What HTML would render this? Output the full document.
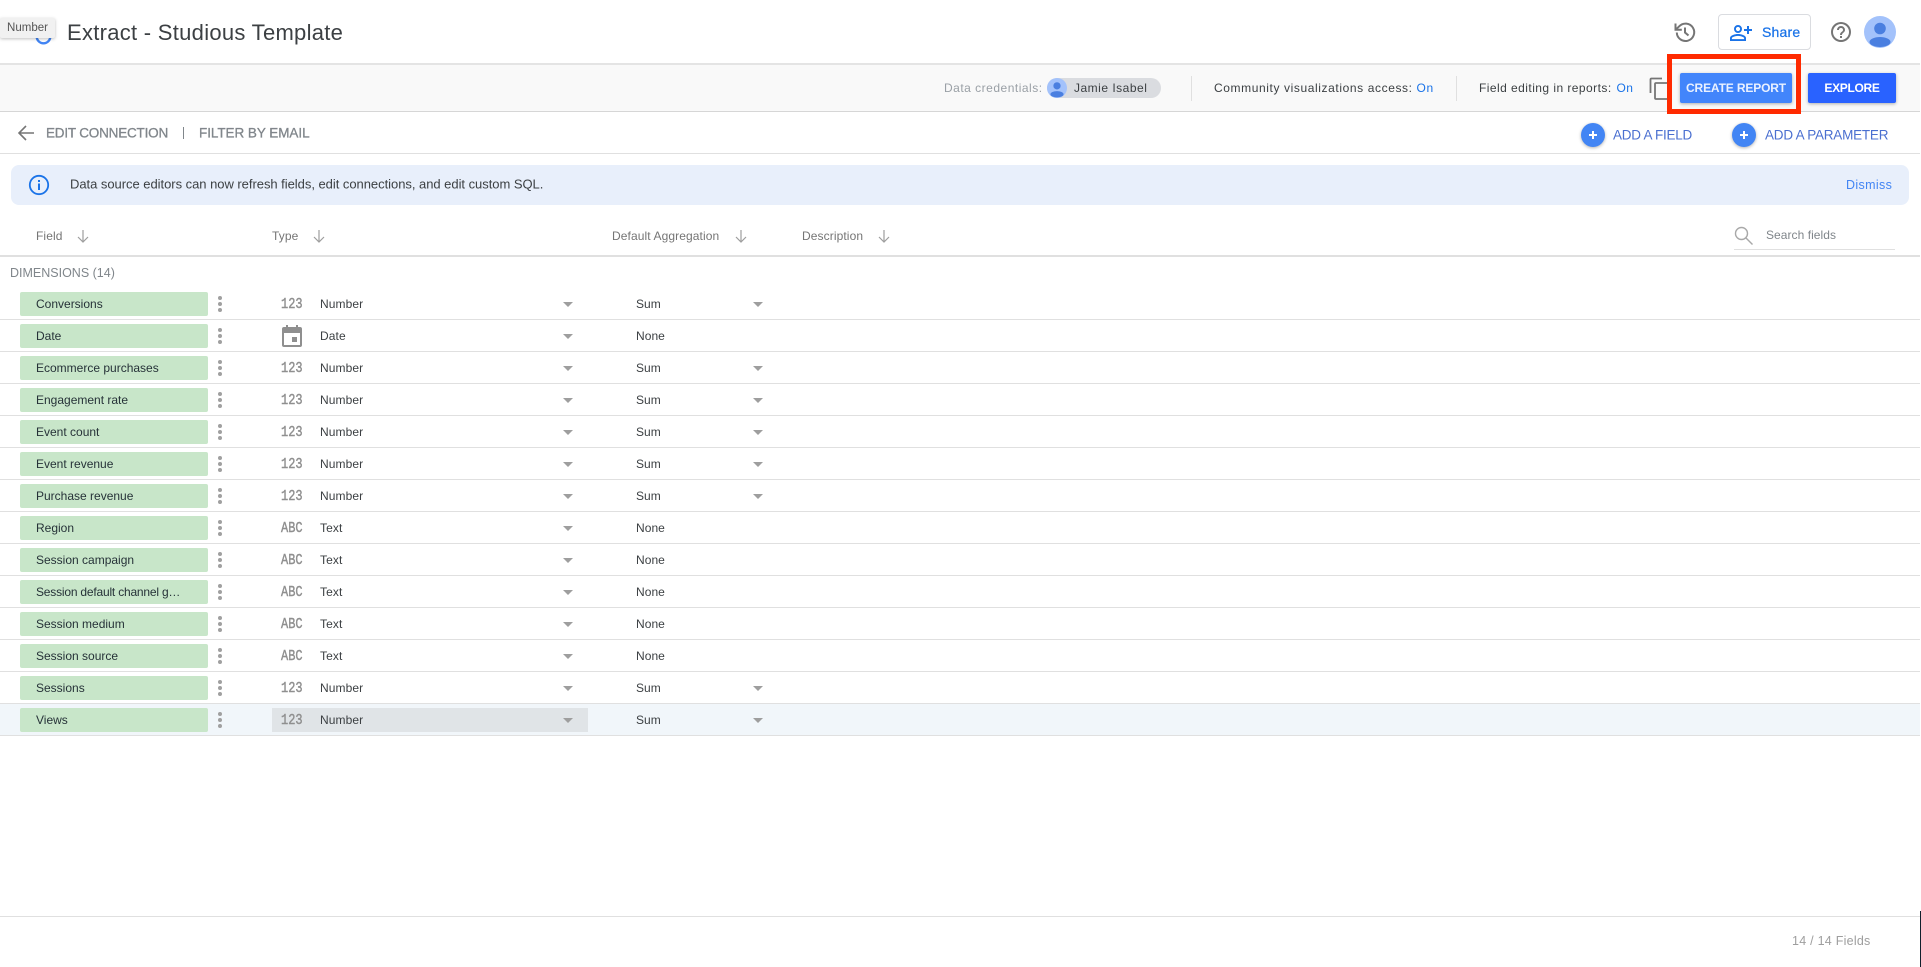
<!DOCTYPE html>
<html lang="en">
<head>
<meta charset="utf-8">
<title>Extract - Studious Template</title>
<style>
html,body{margin:0;padding:0;background:#fff}
body{width:1921px;height:967px;position:relative;overflow:hidden;font-family:"Liberation Sans",Arial,sans-serif;color:#3c4043}
.a{position:absolute;white-space:nowrap}
.t{position:absolute;white-space:nowrap;transform:translateY(-50%)}
.line{position:absolute;left:0;width:1920px;background:#e0e0e0}
.vd{position:absolute;width:1px;background:#e0e0e0;top:76px;height:25px}
.h{font-size:12px;color:#757575;letter-spacing:.1px}
.row{position:absolute;left:0;width:1920px;height:32px;border-bottom:1px solid #e0e0e0;box-sizing:border-box}
.chip{position:absolute;left:20px;top:4px;width:188px;height:24px;background:#c8e6c9;border-radius:2px;font-size:12px;line-height:24px;padding-left:16px;box-sizing:border-box;color:#263238;letter-spacing:0;white-space:nowrap}
.dots{position:absolute;left:218px;top:8px;width:4px;height:4px;border-radius:50%;background:#a0a0a0;box-shadow:0 6px 0 #a0a0a0,0 12px 0 #a0a0a0}
.ic{position:absolute;left:281px;top:1px;font:15px/32px "Liberation Mono",monospace;color:#8f8f8f;transform:scaleX(.8);transform-origin:0 50%;-webkit-text-stroke:.4px #8f8f8f}
.ty{position:absolute;left:320px;top:0;font-size:12px;line-height:32px;color:#3c4043;letter-spacing:.1px}
.ag{position:absolute;left:636px;top:0;font-size:12px;line-height:32px;color:#3c4043;letter-spacing:.05px}
.ar{position:absolute;width:0;height:0;border-left:5px solid transparent;border-right:5px solid transparent;border-top:5px solid #9e9e9e;top:14px}
.a1{left:563px}.a2{left:753px}
.plus{position:absolute;top:123px;width:24px;height:24px;border-radius:50%;background:#4285f4;box-shadow:0 1px 3px rgba(0,0,0,.3)}
.plus:before{content:"";position:absolute;left:8px;top:11px;width:8px;height:2px;background:#fff}
.plus:after{content:"";position:absolute;left:11px;top:8px;width:2px;height:8px;background:#fff}
svg{position:absolute;display:block}
</style>
</head>
<body>

<!-- Top bar -->
<svg style="left:35px;top:28px" width="17" height="17" viewBox="0 0 17 17"><circle cx="8.500" cy="8.500" r="6.800" fill="none" stroke="#4285f4" stroke-width="2.400"/></svg>
<div class="a" style="left:0;top:18px;width:55px;height:20px;background:#f1f1f1;border-radius:2px;box-shadow:0 1px 3px rgba(0,0,0,.25);font-size:11.500px;line-height:20px;text-align:center;color:#555">Number</div>
<div class="t" style="left:67px;top:33px;font-size:22px;color:#3c4043;letter-spacing:.28px">Extract - Studious Template</div>

<svg style="left:1673px;top:20px" width="24" height="24" viewBox="0 0 24 24"><path fill="none" stroke="#757575" stroke-width="2" d="M3.800 12.500a8.700 8.700 0 1 0 2.400-6.200L3.200 9.200"/><path fill="none" stroke="#757575" stroke-width="2" d="M2.500 3.500v6.300h6.300"/><path fill="none" stroke="#757575" stroke-width="2" d="M12 7.500v5l3.500 3"/></svg>
<div class="a" style="left:1718px;top:14px;width:93px;height:36px;border:1px solid #dadce0;border-radius:4px;box-sizing:border-box;background:#fff"></div>
<svg style="left:1729px;top:20px" width="24" height="24" viewBox="0 0 24 24"><path fill="#1a73e8" d="M9 5a4 4 0 1 0 0 8 4 4 0 0 0 0-8zm0 1.900a2.100 2.100 0 1 1 0 4.200 2.100 2.100 0 0 1 0-4.200zM9 14c-2.700 0-8 1.300-8 4v3h16v-3c0-2.700-5.300-4-8-4zm-6.100 5.100V18c0-.6 3.100-2.100 6.100-2.100s6.100 1.500 6.100 2.100v1.100zM20 9V6h-2v3h-3v2h3v3h2v-3h3V9z"/></svg>
<div class="t" style="left:1762px;top:32px;font-size:14px;color:#1a73e8;letter-spacing:.2px;-webkit-text-stroke:.25px #1a73e8">Share</div>
<svg style="left:1829px;top:20px" width="24" height="24" viewBox="0 0 24 24"><path fill="#757575" d="M12 2a10 10 0 1 0 0 20 10 10 0 0 0 0-20zm0 18a8 8 0 1 1 0-16 8 8 0 0 1 0 16zm-1-4h2v2h-2zm1-10a4 4 0 0 0-4 4h2a2 2 0 1 1 4 0c0 2-3 1.750-3 5h2c0-2.250 3-2.500 3-5a4 4 0 0 0-4-4z"/></svg>
<svg style="left:1864px;top:16px" width="32" height="32" viewBox="0 0 32 32"><circle cx="16" cy="16" r="16" fill="#a3c2fb"/><circle cx="16" cy="12.500" r="5.800" fill="#4a7fe0"/><ellipse cx="16" cy="26" rx="10.500" ry="5" fill="#4a7fe0"/></svg>

<div class="line" style="top:63px;height:2px;background:#e4e4e4"></div>

<!-- Toolbar -->
<div class="a" style="left:0;top:65px;width:1920px;height:46px;background:#f9f9f9"></div>
<div class="line" style="top:111px;height:1px;background:#d6d6d6"></div>
<div class="t" style="left:944px;top:88px;font-size:12px;color:#9aa0a6;letter-spacing:.5px">Data credentials:</div>
<div class="a" style="left:1047px;top:78px;width:114px;height:20px;border-radius:10px;background:#dadce0"></div>
<svg style="left:1047px;top:78px" width="20" height="20" viewBox="0 0 32 32"><circle cx="16" cy="16" r="16" fill="#a3c2fb"/><circle cx="16" cy="12.500" r="5.800" fill="#4a7fe0"/><ellipse cx="16" cy="26" rx="10.500" ry="5" fill="#4a7fe0"/></svg>
<div class="t" style="left:1074px;top:88px;font-size:12px;color:#3c4043;letter-spacing:.5px">Jamie Isabel</div>
<div class="vd" style="left:1191px"></div>
<div class="t" style="left:1214px;top:88px;font-size:12px;color:#3c4043;letter-spacing:.6px">Community visualizations access: <span style="color:#1a73e8">On</span></div>
<div class="vd" style="left:1456px"></div>
<div class="t" style="left:1479px;top:88px;font-size:12px;color:#3c4043;letter-spacing:.45px">Field editing in reports: <span style="color:#1a73e8;margin-left:1px">On</span></div>
<svg style="left:1648px;top:76px" width="25" height="25" viewBox="0 0 25 25"><path fill="none" stroke="#757575" stroke-width="1.800" d="M14 2.500H3.500a1 1 0 0 0-1 1V17"/><rect x="7" y="7" width="14" height="16" rx="1" fill="none" stroke="#757575" stroke-width="1.800"/></svg>
<div class="a" style="left:1680px;top:73px;width:112px;height:30px;background:#4285fb;border-radius:2px;box-shadow:0 1px 3px rgba(0,0,0,.3);color:#eaf1ff;font-size:12px;font-weight:bold;line-height:30px;text-align:center;letter-spacing:-.14px">CREATE REPORT</div>
<div class="a" style="left:1808px;top:73px;width:88px;height:30px;background:#2962ff;border-radius:2px;box-shadow:0 1px 3px rgba(0,0,0,.3);color:#fff;font-size:12px;font-weight:bold;line-height:30px;text-align:center;letter-spacing:-.3px">EXPLORE</div>
<div class="a" style="left:1667px;top:54px;width:134px;height:60px;border:5px solid #ff2a00;box-sizing:border-box"></div>

<!-- Sub header -->
<svg style="left:17px;top:124px" width="18" height="18" viewBox="0 0 18 18"><path fill="none" stroke="#757575" stroke-width="1.600" d="M17 9H2M9 2 2 9l7 7"/></svg>
<div class="t" style="left:46px;top:133px;font-size:13.500px;color:#80868b;letter-spacing:-.2px;-webkit-text-stroke:.3px #80868b">EDIT CONNECTION</div>
<div class="a" style="left:183px;top:127px;width:1px;height:12px;background:#80868b"></div>
<div class="t" style="left:199px;top:133px;font-size:13.500px;color:#80868b;letter-spacing:-.05px;-webkit-text-stroke:.3px #80868b">FILTER BY EMAIL</div>

<div class="plus" style="left:1581px"></div>
<div class="t" style="left:1613px;top:135px;font-size:13.500px;color:#4a6fd0;letter-spacing:-.25px">ADD A FIELD</div>
<div class="plus" style="left:1732px"></div>
<div class="t" style="left:1765px;top:135px;font-size:13.500px;color:#4a6fd0;letter-spacing:-.22px">ADD A PARAMETER</div>

<div class="line" style="top:153px;height:1px"></div>

<!-- Banner -->
<div class="a" style="left:11px;top:165px;width:1898px;height:40px;background:#e8effb;border-radius:8px"></div>
<svg style="left:28px;top:174px" width="22" height="22" viewBox="0 0 22 22"><circle cx="11" cy="11" r="9.200" fill="none" stroke="#1a73e8" stroke-width="1.800"/><rect x="10" y="9.500" width="2" height="6.500" fill="#1a73e8"/><rect x="10" y="6" width="2" height="2" fill="#1a73e8"/></svg>
<div class="t" style="left:70px;top:184px;font-size:13px;color:#3c4043;letter-spacing:-.035px">Data source editors can now refresh fields, edit connections, and edit custom SQL.</div>
<div class="t" style="left:1846px;top:185px;font-size:12.500px;color:#4285f4;letter-spacing:.35px">Dismiss</div>

<!-- Table head -->
<div class="t h" style="left:36px;top:236px">Field</div>
<svg style="left:76px;top:228px" width="14" height="16" viewBox="0 0 14 16"><path fill="none" stroke="#9e9e9e" stroke-width="1.200" d="M7 2v12M2 9l5 5 5-5"/></svg>
<div class="t h" style="left:272px;top:236px">Type</div>
<svg style="left:312px;top:228px" width="14" height="16" viewBox="0 0 14 16"><path fill="none" stroke="#9e9e9e" stroke-width="1.200" d="M7 2v12M2 9l5 5 5-5"/></svg>
<div class="t h" style="left:612px;top:236px">Default Aggregation</div>
<svg style="left:734px;top:228px" width="14" height="16" viewBox="0 0 14 16"><path fill="none" stroke="#9e9e9e" stroke-width="1.200" d="M7 2v12M2 9l5 5 5-5"/></svg>
<div class="t h" style="left:802px;top:236px">Description</div>
<svg style="left:877px;top:228px" width="14" height="16" viewBox="0 0 14 16"><path fill="none" stroke="#9e9e9e" stroke-width="1.200" d="M7 2v12M2 9l5 5 5-5"/></svg>

<svg style="left:1733px;top:225px" width="21" height="21" viewBox="0 0 21 21"><circle cx="8.500" cy="8.500" r="6" fill="none" stroke="#a8a8a8" stroke-width="1.400"/><path d="m13 13 6.500 6.500" stroke="#a8a8a8" stroke-width="1.400"/></svg>
<div class="t" style="left:1766px;top:235px;font-size:12px;color:#80868b;letter-spacing:.05px">Search fields</div>
<div class="a" style="left:1734px;top:249px;width:161px;height:1px;background:#e0e0e0"></div>

<div class="line" style="top:255px;height:2px"></div>
<div class="t" style="left:10px;top:273px;font-size:12.500px;color:#80868b;letter-spacing:0">DIMENSIONS (14)</div>

<!-- Rows -->
<div class="row" style="top:288px"><div class="chip">Conversions</div><div class="dots"></div><div class="ic">123</div><div class="ty">Number</div><div class="ar a1"></div><div class="ag">Sum</div><div class="ar a2"></div></div>
<div class="row" style="top:320px"><div class="chip">Date</div><div class="dots"></div><svg style="left:282px;top:5px" width="20" height="22" viewBox="0 0 20 22"><path fill="#8f8f8f" d="M4 0h2v2h8V0h2v2h2a2 2 0 0 1 2 2v16a2 2 0 0 1-2 2H2a2 2 0 0 1-2-2V4a2 2 0 0 1 2-2h2zM2 8v12h16V8zm8 4h5v5h-5z"/></svg><div class="ty">Date</div><div class="ar a1"></div><div class="ag">None</div></div>
<div class="row" style="top:352px"><div class="chip">Ecommerce purchases</div><div class="dots"></div><div class="ic">123</div><div class="ty">Number</div><div class="ar a1"></div><div class="ag">Sum</div><div class="ar a2"></div></div>
<div class="row" style="top:384px"><div class="chip">Engagement rate</div><div class="dots"></div><div class="ic">123</div><div class="ty">Number</div><div class="ar a1"></div><div class="ag">Sum</div><div class="ar a2"></div></div>
<div class="row" style="top:416px"><div class="chip">Event count</div><div class="dots"></div><div class="ic">123</div><div class="ty">Number</div><div class="ar a1"></div><div class="ag">Sum</div><div class="ar a2"></div></div>
<div class="row" style="top:448px"><div class="chip">Event revenue</div><div class="dots"></div><div class="ic">123</div><div class="ty">Number</div><div class="ar a1"></div><div class="ag">Sum</div><div class="ar a2"></div></div>
<div class="row" style="top:480px"><div class="chip">Purchase revenue</div><div class="dots"></div><div class="ic">123</div><div class="ty">Number</div><div class="ar a1"></div><div class="ag">Sum</div><div class="ar a2"></div></div>
<div class="row" style="top:512px"><div class="chip">Region</div><div class="dots"></div><div class="ic">ABC</div><div class="ty">Text</div><div class="ar a1"></div><div class="ag">None</div></div>
<div class="row" style="top:544px"><div class="chip">Session campaign</div><div class="dots"></div><div class="ic">ABC</div><div class="ty">Text</div><div class="ar a1"></div><div class="ag">None</div></div>
<div class="row" style="top:576px"><div class="chip" style="letter-spacing:-.2px">Session default channel g…</div><div class="dots"></div><div class="ic">ABC</div><div class="ty">Text</div><div class="ar a1"></div><div class="ag">None</div></div>
<div class="row" style="top:608px"><div class="chip">Session medium</div><div class="dots"></div><div class="ic">ABC</div><div class="ty">Text</div><div class="ar a1"></div><div class="ag">None</div></div>
<div class="row" style="top:640px"><div class="chip">Session source</div><div class="dots"></div><div class="ic">ABC</div><div class="ty">Text</div><div class="ar a1"></div><div class="ag">None</div></div>
<div class="row" style="top:672px"><div class="chip">Sessions</div><div class="dots"></div><div class="ic">123</div><div class="ty">Number</div><div class="ar a1"></div><div class="ag">Sum</div><div class="ar a2"></div></div>
<div class="row" style="top:704px;background:#f1f6fa"><div class="chip">Views</div><div class="dots"></div><div class="a" style="left:272px;top:4px;width:316px;height:24px;background:#e0e4e7"></div><div class="ic">123</div><div class="ty">Number</div><div class="ar a1"></div><div class="ag">Sum</div><div class="ar a2"></div></div>

<!-- Footer -->
<div class="line" style="top:916px;height:1px"></div>
<div class="t" style="left:1792px;top:941px;font-size:12.500px;color:#9e9e9e;letter-spacing:.25px">14 / 14 Fields</div>
<div class="a" style="left:1920px;top:911px;width:1px;height:56px;background:#10202c"></div>

</body>
</html>
